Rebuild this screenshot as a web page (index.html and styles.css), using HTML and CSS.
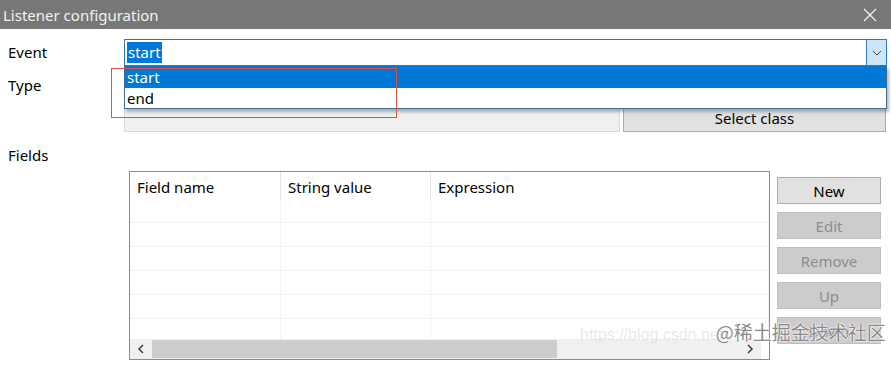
FILE: index.html
```html
<!DOCTYPE html>
<html lang="en">
<head>
  <meta charset="UTF-8">
  <title>Listener configuration</title>
  <link rel="stylesheet" href="styles.css">
</head>
<body>

  <div class="window">
    <div class="titlebar">
      <span class="title">Listener configuration</span>
      <svg class="close" width="14" height="14" viewBox="0 0 14 14">
        <path d="M1 1 L13 13 M13 1 L1 13" stroke="#f4f4f4" stroke-width="1.2" fill="none"/>
      </svg>
    </div>

    <div class="form">
      <!-- Event -->
      <div class="row row-event">
        <label class="lbl">Event</label>
        <div class="combo">
          <span class="combo-text"><span class="sel">start</span></span>
          <span class="combo-btn">
            <svg width="10" height="6" viewBox="0 0 10 6"><path d="M1 1 L5 5 L9 1" stroke="#444" stroke-width="1" fill="none"/></svg>
          </span>
          <div class="dropdown">
            <div class="opt active">start</div>
            <div class="opt">end</div>
          </div>
        </div>
      </div>

      <!-- Type -->
      <div class="row row-type">
        <label class="lbl">Type</label>
        <div class="blank"></div>
      </div>

      <!-- Class -->
      <div class="row row-class">
        <span class="lbl"></span>
        <div class="class-line">
          <div class="textfield"></div>
          <button class="btn">Select class</button>
        </div>
      </div>

      <!-- Fields -->
      <div class="row row-fields-label">
        <label class="lbl">Fields</label>
      </div>

      <div class="row row-fields">
        <span class="lbl"></span>
        <div class="fields-box">
          <div class="table">
            <div class="thead">
              <div class="th">Field name</div>
              <div class="th">String value</div>
              <div class="th th-last">Expression</div>
            </div>
            <div class="tbody">
              <div class="tr"><div class="td"></div><div class="td"></div><div class="td td-last"></div></div>
              <div class="tr"><div class="td"></div><div class="td"></div><div class="td td-last"></div></div>
              <div class="tr"><div class="td"></div><div class="td"></div><div class="td td-last"></div></div>
              <div class="tr"><div class="td"></div><div class="td"></div><div class="td td-last"></div></div>
              <div class="tr"><div class="td"></div><div class="td"></div><div class="td td-last"></div></div>
              <div class="tr tr-last"><div class="td"></div><div class="td"></div><div class="td td-last"></div></div>
            </div>
            <div class="hscroll">
              <span class="arrow">
                <svg width="8" height="10" viewBox="0 0 8 10"><path d="M6 1 L2 5 L6 9" stroke="#444" stroke-width="1.6" fill="none"/></svg>
              </span>
              <div class="track"><div class="thumb"></div></div>
              <span class="arrow">
                <svg width="8" height="10" viewBox="0 0 8 10"><path d="M2 1 L6 5 L2 9" stroke="#444" stroke-width="1.6" fill="none"/></svg>
              </span>
            </div>
          </div>

          <div class="side-buttons">
            <button class="btn">New</button>
            <button class="btn" disabled>Edit</button>
            <button class="btn" disabled>Remove</button>
            <button class="btn" disabled>Up</button>
            <button class="btn" disabled>Down</button>
          </div>
        </div>
      </div>
    </div>

    <!-- annotation + watermark -->
    <div class="mark-box"></div>
    <div class="watermark">
      <span class="wm-url">https://blog.csdn.net/</span>
      <span class="wm-cn">@稀土掘金技术社区</span>
    </div>
  </div>

</body>
</html>
```

FILE: styles.css
```css
body {
  margin: 0;
  background: #fff;
  font-family: "Noto Sans", "Noto Sans CJK SC", sans-serif;
  font-size: 15px;
  color: #000;
}

.window {
  position: relative;
  width: 891px;
  height: 366px;
  overflow: hidden;
  background: #fff;
}

.titlebar {
  height: 29px;
  background: #777777;
  display: flex;
  align-items: center;
  justify-content: space-between;
  padding: 0 14px 0 3px;
}

.title {
  color: #f2f2f2;
  font-size: 15px;
}

.form {
  padding: 10px 4px 0 8px;
}

.row {
  display: flex;
}

.lbl {
  width: 116px;
  flex: none;
  line-height: 27px;
}

/* Event */
.combo {
  position: relative;
  flex: 1;
  height: 27px;
  box-sizing: border-box;
  border: 1px solid #2b79c2;
  display: flex;
  align-items: stretch;
}

.combo-text {
  flex: 1;
  padding: 2px 2px;
  line-height: 21px;
}

.sel {
  display: inline-block;
  background: #0078d7;
  color: #fff;
  padding: 0 1px;
}

.combo-btn {
  width: 19px;
  background: #cce4f7;
  border-left: 1px solid #2b79c2;
  display: flex;
  align-items: center;
  justify-content: center;
}

.dropdown {
  position: absolute;
  left: -1px;
  right: -1px;
  top: 26px;
  background: #fff;
  border: 1px solid #3c6e98;
  border-top: none;
  box-shadow: 2px 3px 3px rgba(0, 0, 0, 0.28);
  z-index: 2;
}

.opt {
  height: 20px;
  line-height: 20px;
  padding-left: 2px;
}

.opt.active {
  height: 22px;
  line-height: 23px;
  background: #0078d7;
  color: #fff;
}

/* Type */
.row-type {
  margin-top: 6px;
}

.blank {
  flex: 1;
  height: 27px;
}

/* Class */
.row-class {
  margin-top: 7px;
}

.class-line {
  flex: 1;
  display: flex;
  gap: 3px;
  padding-right: 1px;
}

.textfield {
  width: 496px;
  height: 25px;
  box-sizing: border-box;
  border: 1px solid #d9d9d9;
  background: #f0f0f0;
  margin-top: 1px;
}

.btn {
  font-family: "Noto Sans", sans-serif;
  font-size: 15px;
  background: #e1e1e1;
  border: 1px solid #adadad;
  color: #000;
  padding: 0 0 2px;
  height: 26px;
  line-height: 20px;
}

.class-line .btn {
  flex: 1;
}

.btn:disabled {
  background: #cccccc;
  border-color: #bfbfbf;
  color: #8d8d8d;
}

/* Fields */
.row-fields-label {
  margin-top: 10px;
}

.row-fields {
  margin-top: 2px;
}

.fields-box {
  flex: 1;
  display: flex;
  gap: 7px;
}

.table {
  margin-left: 5px;
  width: 641px;
  height: 189px;
  box-sizing: border-box;
  border: 1px solid #8c8c8c;
  display: flex;
  flex-direction: column;
  overflow: hidden;
}

.thead,
.tr {
  display: grid;
  grid-template-columns: 151px 150px 1fr;
}

.thead {
  height: 26px;
}

.th {
  padding: 4px 0 0 7px;
  line-height: 22px;
  border-right: 1px solid #e5e5e5;
}

.th-last,
.td-last {
  border-right: none;
}

.tbody {
  flex: 1;
}

.tr {
  height: 24px;
  border-bottom: 1px solid #f0f0f0;
  box-sizing: border-box;
}

.tr:first-child {
  height: 25px;
}

.tr-last {
  height: 20px;
  border-bottom: none;
}

.td {
  border-right: 1px solid #f3f3f3;
}

.hscroll {
  height: 20px;
  display: flex;
  background: #f0f0f0;
  margin-right: 8px;
}

.arrow {
  width: 22px;
  display: flex;
  align-items: center;
  justify-content: center;
}

.track {
  flex: 1;
  display: flex;
  padding: 1px 0;
}

.thumb {
  width: 405px;
  background: #cdcdcd;
}

.side-buttons {
  padding-top: 6px;
  display: flex;
  flex-direction: column;
  gap: 8px;
}

.side-buttons .btn {
  width: 104px;
  height: 27px;
  padding: 1px 0 0;
  line-height: 22px;
}

/* red annotation box */
.mark-box {
  position: absolute;
  left: 111px;
  top: 68px;
  width: 284px;
  height: 48px;
  border: 1px solid #d9534f;
  z-index: 3;
}

.watermark {
  position: absolute;
  left: 580px;
  top: 318px;
  z-index: 4;
  display: flex;
  align-items: baseline;
  white-space: nowrap;
}

.wm-url {
  font-family: "Liberation Sans", sans-serif;
  font-size: 16px;
  color: rgba(215, 215, 215, 0.55);
  margin-right: -12px;
}

.wm-cn {
  font-family: "Noto Sans CJK SC", sans-serif;
  font-size: 19px;
  color: #8a8a8a;
  text-shadow: 0 0 2px #fff, 0 0 2px #fff, 0 0 1px #fff;
}
```
